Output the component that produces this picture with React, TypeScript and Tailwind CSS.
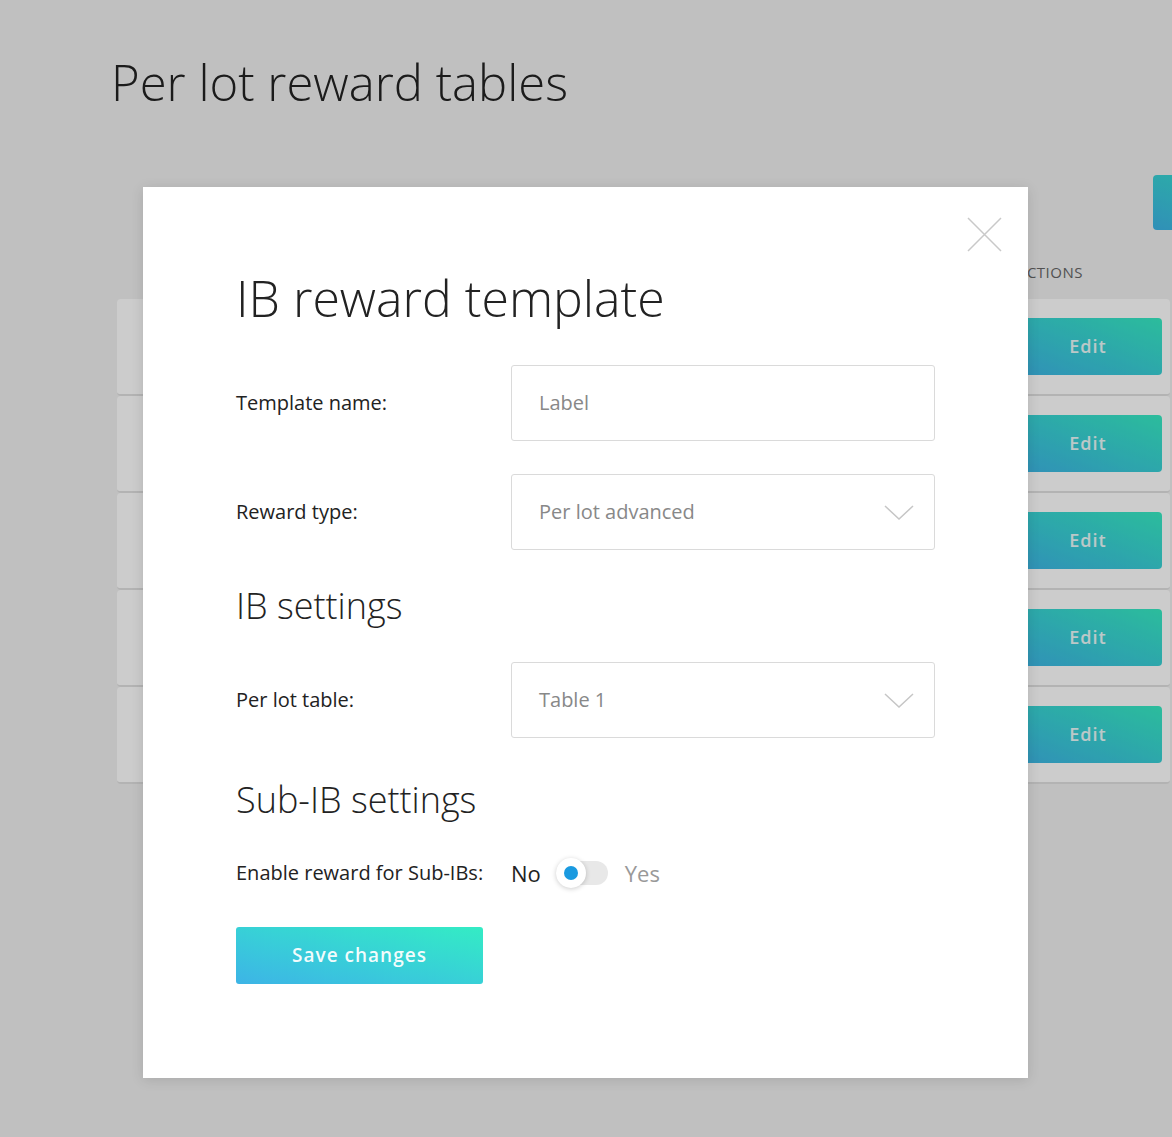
import React from 'react';

const font = { fontFamily: '"Open Sans", "Noto Sans", sans-serif' };

const rows = [1, 2, 3, 4, 5];

const Chevron = () => (
  <svg width="30" height="16" viewBox="0 0 30 16" fill="none" className="shrink-0">
    <path d="M1 2 L15 15 L29 2" stroke="#c6c6c6" strokeWidth="1.5" />
  </svg>
);

const Field = ({ label, value, select }: { label: string; value: string; select?: boolean }) => (
  <div className="flex items-center">
    <div className="w-[275px] text-[20px] font-medium text-[#222]">{label}</div>
    <div className="flex h-[76px] w-[424px] items-center justify-between rounded-[3px] border border-[#dadada] pl-[27px] pr-[20px]">
      <span className="text-[20px] text-[#888]">{value}</span>
      {select && <Chevron />}
    </div>
  </div>
);

export default function App() {
  return (
    <div className="relative h-[1137px] w-[1172px] overflow-hidden bg-[#f1f1f1]" style={font}>
      {/* page under the dialog */}
      <div className="pl-[111px] pr-[2px] pt-[46px]">
        <h1 className="text-[49px] font-light leading-[72px] text-[#222]">Per lot reward tables</h1>
        <div className="mt-[57px] flex justify-end">
          <div className="-mr-[133px] h-[55px] w-[150px] rounded-[4px] bg-gradient-to-tr from-[#3db4e6] to-[#38ecc3]" />
        </div>
        <div className="ml-[6px] mt-[27px]">
          <div className="flex h-[30px] items-center justify-end pr-[87px] text-[15px] tracking-[0.5px] text-[#666]">ACTIONS</div>
          <div className="mt-[12px] flex flex-col">
            {rows.map((r) => (
              <div key={r} className="flex h-[97px] items-center justify-end rounded-[4px] border-b-2 border-[#e0e0e0] bg-white pr-[8px]">
                <button className="flex h-[57px] w-[148px] items-center justify-center rounded-[4px] bg-gradient-to-tr from-[#3db4e6] to-[#38ecc3] text-[18px] font-semibold tracking-[1px] text-white/90">
                  Edit
                </button>
              </div>
            ))}
          </div>
        </div>
      </div>

      {/* overlay + dialog */}
      <div className="absolute inset-0 flex justify-center bg-black/20 pr-[1px] pt-[187px]">
        <div className="relative h-[891px] w-[885px] bg-white pl-[93px] pt-[85px] shadow-[0_2px_12px_rgba(0,0,0,0.12)]">
          <button className="absolute right-[26px] top-[30px]">
            <svg width="35" height="35" viewBox="0 0 35 35" fill="none">
              <path d="M1 1 L34 34 M34 1 L1 34" stroke="#c9c9c9" strokeWidth="1.5" />
            </svg>
          </button>

          <h2 className="text-[50px] font-light leading-[52px] text-[#222]">IB reward template</h2>

          <div className="mt-[41px] flex flex-col gap-[33px]">
            <Field label="Template name:" value="Label" />
            <Field label="Reward type:" value="Per lot advanced" select />
          </div>

          <h3 className="mt-[36px] text-[36px] font-light leading-[40px] text-[#222]">IB settings</h3>
          <div className="mt-[36px]">
            <Field label="Per lot table:" value="Table 1" select />
          </div>

          <h3 className="mt-[42px] text-[36px] font-light leading-[40px] text-[#222]">Sub-IB settings</h3>

          <div className="mt-[38px] flex h-[30px] items-center">
            <div className="w-[275px] text-[20px] font-medium text-[#222]">Enable reward for Sub-IBs:</div>
            <span className="text-[22px] text-[#222]">No</span>
            <div className="relative ml-[15px] h-[24px] w-[52px] rounded-full bg-[#e8e8e8]">
              <div className="absolute -top-[3px] left-0 flex h-[30px] w-[30px] items-center justify-center rounded-full bg-white shadow-[0_1px_5px_rgba(0,0,0,0.2)]">
                <div className="h-[14px] w-[14px] rounded-full bg-[#1a9ae0]" />
              </div>
            </div>
            <span className="ml-[17px] text-[22px] text-[#999]">Yes</span>
          </div>

          <button className="mt-[39px] flex h-[57px] w-[247px] items-center justify-center rounded-[3px] bg-gradient-to-tr from-[#3db4e6] to-[#34ecc4] text-[19px] font-semibold tracking-[1px] text-white/95">
            Save changes
          </button>
        </div>
      </div>
    </div>
  );
}
